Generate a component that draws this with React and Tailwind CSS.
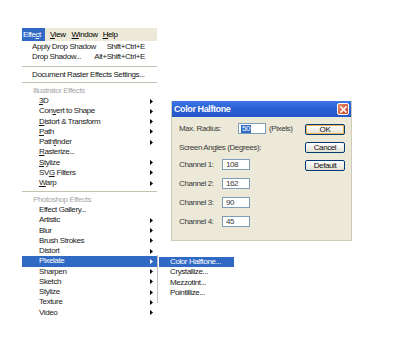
import { useState } from 'react';

const ui = { fontFamily: '"Liberation Sans", Arial, sans-serif' };

function U({ children }) {
  return <span className="underline underline-offset-1 decoration-[0.5px]">{children}</span>;
}

function Arrow({ white }) {
  return (
    <svg width="3" height="5" viewBox="0 0 3 5" className="shrink-0">
      <path d="M0 0 L3 2.5 L0 5 Z" fill={white ? '#ffffff' : '#000000'} />
    </svg>
  );
}

function Row({ children, sub, indent, shortcut, active, header }) {
  return (
    <div
      className={`h-[10.25px] flex items-center pr-[4px] ${indent ? 'pl-[17px]' : header ? 'pl-[11px]' : 'pl-[10px]'} ${
        active ? 'bg-[#316ac5] text-white' : header ? 'text-[#a7a7a7]' : 'text-[#1a1a1a]'
      }`}
    >
      <span className="flex-1 whitespace-nowrap">{children}</span>
      {shortcut && <span className="mr-[8px] whitespace-nowrap">{shortcut}</span>}
      {sub && <Arrow white={active} />}
    </div>
  );
}

function Sep({ h = 'h-[6px]' }) {
  return (
    <div className={`${h} flex items-center`}>
      <div className="w-full h-px bg-[#c5c2b2]" />
    </div>
  );
}

function Field({ value, selected, w = 'w-[28px]' }) {
  return (
    <div className={`${w} h-[11px] bg-white border border-[#7f9db9] flex items-center pl-[2px]`}>
      <span className={selected ? 'bg-[#316ac5] text-white px-[1px]' : 'px-[1px]'}>{value}</span>
    </div>
  );
}

function Btn({ children, primary }) {
  return (
    <div
      className={`w-[40px] h-[11px] rounded-[2px] border border-[#003c74] bg-gradient-to-b from-white to-[#e3e1d6] flex items-center justify-center text-[#111] ${
        primary ? 'shadow-[inset_0_0_0_1px_#f1b453]' : ''
      }`}
    >
      {children}
    </div>
  );
}

function Menu() {
  return (
    <div className="pt-[28px] pl-[22px]">
      <div className="w-[135px] h-[13px] bg-[#ece9d8] flex items-center">
        <div className="h-full w-[23px] bg-[#316ac5] text-white flex items-center pl-[1px]">
          Effe<U>c</U>t
        </div>
        <span className="ml-[5px]"><U>V</U>iew</span>
        <span className="ml-[6px]"><U>W</U>indow</span>
        <span className="ml-[5px]"><U>H</U>elp</span>
      </div>
      <div className="w-[135px] bg-white pt-[1px]">
        <Row shortcut="Shift+Ctrl+E">Apply Drop Shadow</Row>
        <Row shortcut="Alt+Shift+Ctrl+E">Drop Shadow...</Row>
        <Sep h="h-[7px]" />
        <Row>Document Raster Effects Settings...</Row>
        <Sep />
        <Row header>Illustrator Effects</Row>
        <Row indent sub><U>3</U>D</Row>
        <Row indent sub>Con<U>v</U>ert to Shape</Row>
        <Row indent sub><U>D</U>istort &amp; Transform</Row>
        <Row indent sub><U>P</U>ath</Row>
        <Row indent sub>Path<U>f</U>inder</Row>
        <Row indent><U>R</U>asterize...</Row>
        <Row indent sub><U>S</U>tylize</Row>
        <Row indent sub>SV<U>G</U> Filters</Row>
        <Row indent sub><U>W</U>arp</Row>
        <Sep h="h-[6.5px]" />
        <Row header>Photoshop Effects</Row>
        <Row indent>Effect Gallery...</Row>
        <Row indent sub>Artistic</Row>
        <Row indent sub>Blur</Row>
        <Row indent sub>Brush Strokes</Row>
        <Row indent sub>Distort</Row>
        <Row indent sub active>Pixelate</Row>
        <Row indent sub>Sharpen</Row>
        <Row indent sub>Sketch</Row>
        <Row indent sub>Stylize</Row>
        <Row indent sub>Texture</Row>
        <Row indent sub>Video</Row>
      </div>
    </div>
  );
}

function SubMenu() {
  return (
    <div className="absolute left-[157px] top-[255px] w-[77px] h-[48px] bg-white border-l border-[#bdbdbd] pt-[2px] pl-px">
      <div className="h-[10.25px] bg-[#316ac5] text-white flex items-center pl-[11px]">Color Halftone...</div>
      <div className="h-[10.25px] flex items-center pl-[11px] text-[#1a1a1a]">Crystallize...</div>
      <div className="h-[10.25px] flex items-center pl-[11px] text-[#1a1a1a]">Mezzotint...</div>
      <div className="h-[10.25px] flex items-center pl-[11px] text-[#1a1a1a]">Pointillize...</div>
    </div>
  );
}

function Dialog() {
  const [radius] = useState('50');
  const channels = [
    ['Channel 1:', '108'],
    ['Channel 2:', '162'],
    ['Channel 3:', '90'],
    ['Channel 4:', '45'],
  ];
  return (
    <div className="absolute left-[171px] top-[101px] w-[181px] h-[140px] bg-[#ece9d8] border-x border-b border-[#cfcbbb] flex flex-col">
      <div className="h-[16px] bg-gradient-to-b from-[#3d78e6] via-[#2a5fd4] to-[#2456c8] flex items-center justify-between pl-[2px] pr-[2px]">
        <span className="text-white font-bold text-[9px] tracking-[-0.4px]">Color Halftone</span>
        <div className="w-[12px] h-[12px] rounded-[2px] border border-white bg-gradient-to-br from-[#e98a6a] to-[#cc3f1b] flex items-center justify-center">
          <svg width="7" height="7" viewBox="0 0 7 7">
            <path d="M1 1 L6 6 M6 1 L1 6" stroke="#fff" strokeWidth="1.6" strokeLinecap="square" />
          </svg>
        </div>
      </div>
      <div className="flex pl-[7px] text-[#3a3a3a]">
        <div className="w-[126px]">
          <div className="flex items-center mt-[6px]">
            <span className="w-[59px]">Max. Radius:</span>
            <Field value={radius} selected />
            <span className="ml-[3px]">(Pixels)</span>
          </div>
          <div className="mt-[9px] h-[10px] flex items-center">Screen Angles (Degrees):</div>
          {channels.map(([label, val], i) => (
            <div key={label} className={`flex items-center ${i === 0 ? 'mt-[6px]' : 'mt-[8px]'}`}>
              <span className="w-[43px]">{label}</span>
              <Field value={val} />
            </div>
          ))}
        </div>
        <div className="flex flex-col mt-[7px]">
          <Btn primary>OK</Btn>
          <div className="mt-[7px]"><Btn>Cancel</Btn></div>
          <div className="mt-[7px]"><Btn>Default</Btn></div>
        </div>
      </div>
    </div>
  );
}

export default function App() {
  return (
    <div className="w-[400px] h-[353px] bg-white relative overflow-hidden text-[8px] leading-none tracking-[-0.4px]" style={ui}>
      <Menu />
      <SubMenu />
      <Dialog />
    </div>
  );
}
